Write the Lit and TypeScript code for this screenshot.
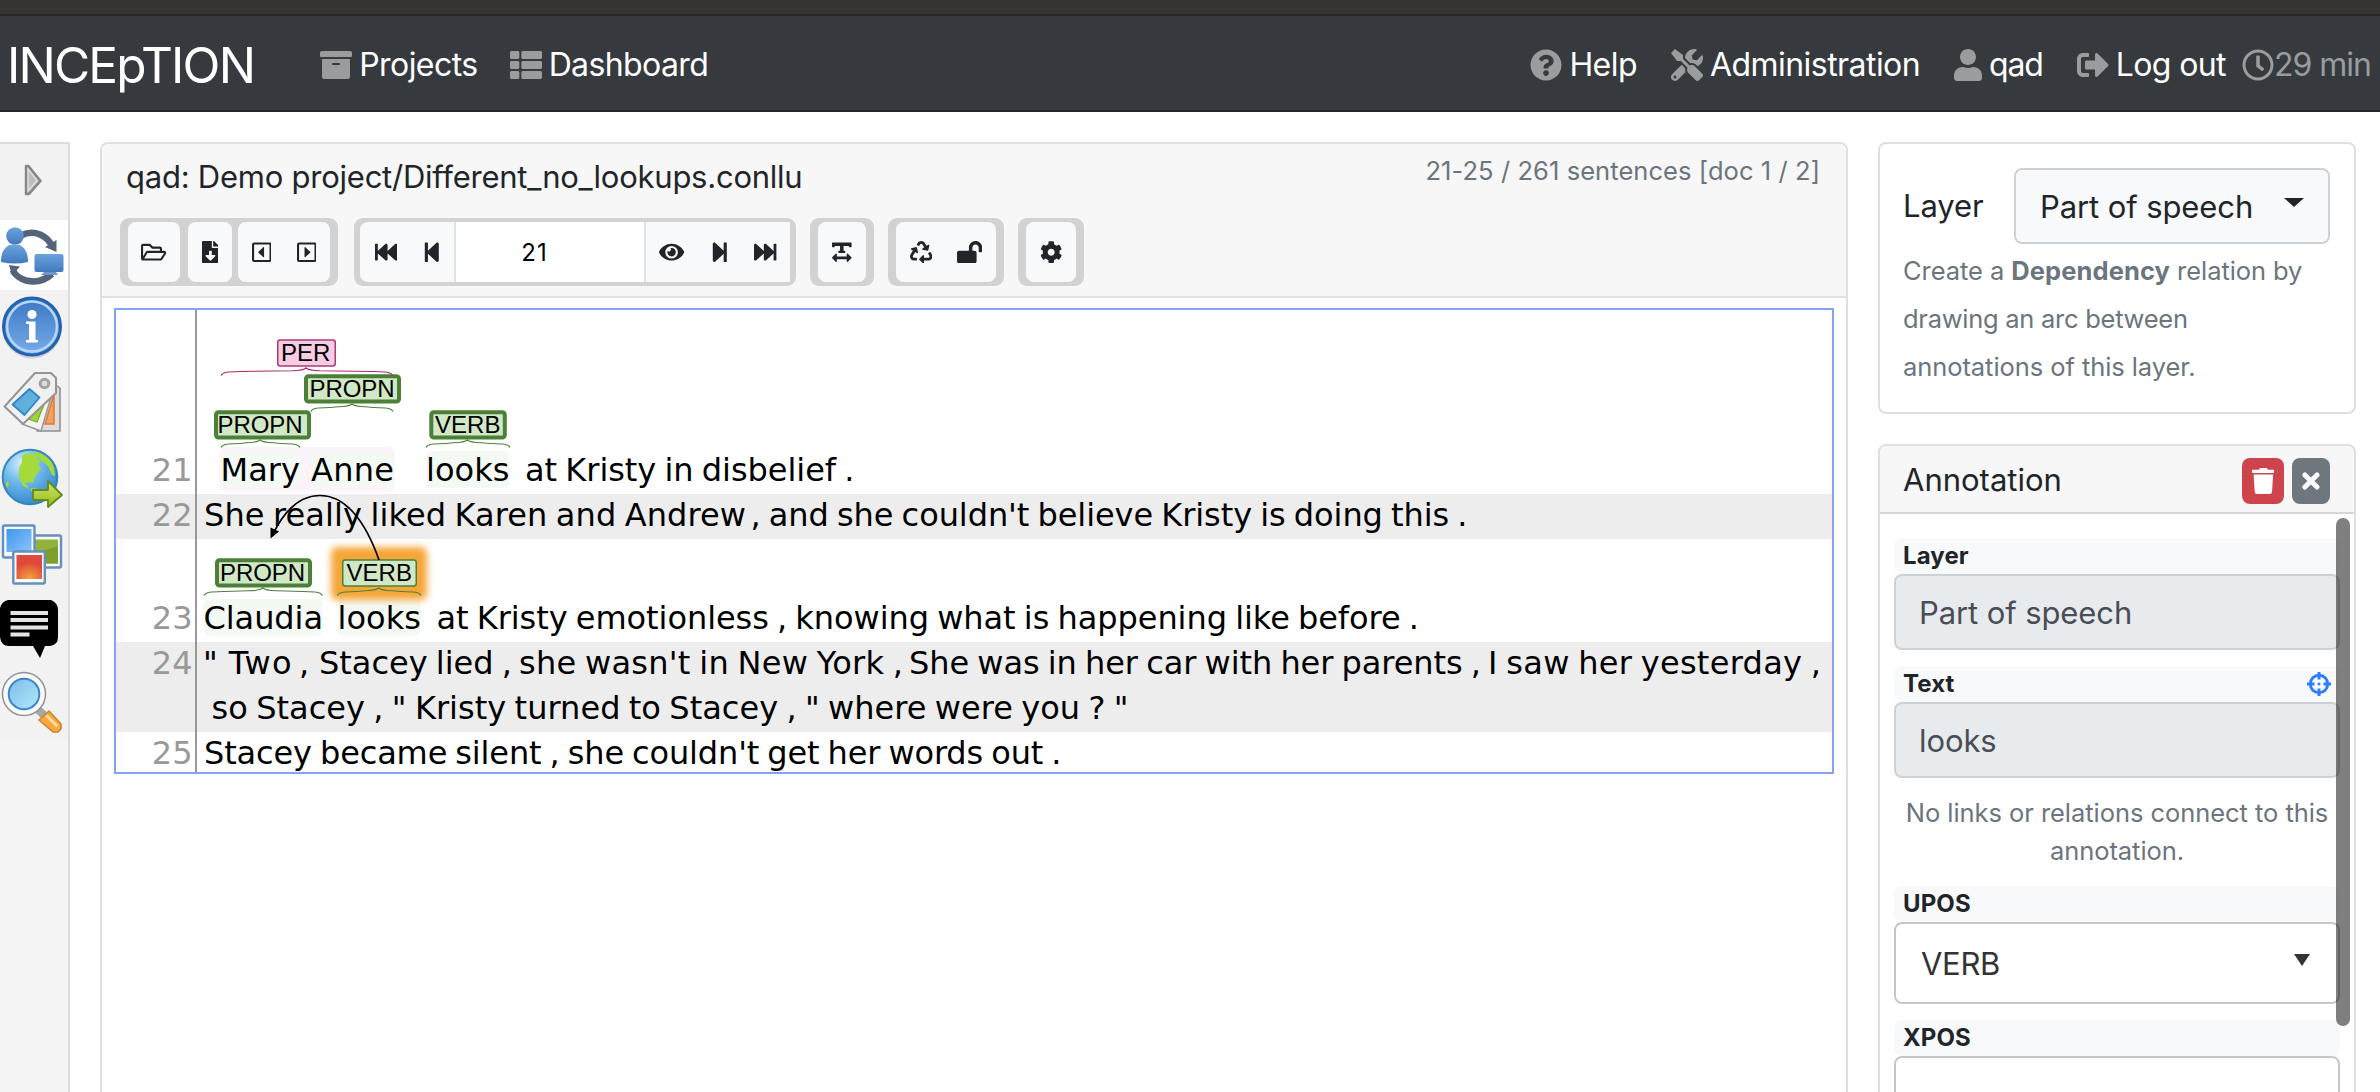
import { LitElement, html, css, svg } from "lit";
import { customElement } from "lit/decorators.js";

/* Glyph outlines: [viewBox width, viewBox height, markup] */
const ICONS: Record<string, [number, number, unknown]> = {
  archive: [512, 512, svg`<path d="M32 448c0 17.7 14.3 32 32 32h384c17.7 0 32-14.3 32-32V160H32v288zm160-212c0-6.6 5.4-12 12-12h104c6.6 0 12 5.4 12 12v8c0 6.6-5.4 12-12 12H204c-6.6 0-12-5.4-12-12v-8zM480 32H32C14.3 32 0 46.3 0 64v48c0 8.8 7.2 16 16 16h480c8.8 0 16-7.2 16-16V64c0-17.7-14.3-32-32-32z"/>`],
  list: [512, 512, svg`<path d="M149.333 216v80c0 13.255-10.745 24-24 24H24c-13.255 0-24-10.745-24-24v-80c0-13.255 10.745-24 24-24h101.333c13.255 0 24 10.745 24 24zM0 376v80c0 13.255 10.745 24 24 24h101.333c13.255 0 24-10.745 24-24v-80c0-13.255-10.745-24-24-24H24c-13.255 0-24 10.745-24 24zM125.333 32H24C10.745 32 0 42.745 0 56v80c0 13.255 10.745 24 24 24h101.333c13.255 0 24-10.745 24-24V56c0-13.255-10.745-24-24-24zm80 448H488c13.255 0 24-10.745 24-24v-80c0-13.255-10.745-24-24-24H205.333c-13.255 0-24 10.745-24 24v80c0 13.255 10.745 24 24 24zm-24-424v80c0 13.255 10.745 24 24 24H488c13.255 0 24-10.745 24-24V56c0-13.255-10.745-24-24-24H205.333c-13.255 0-24 10.745-24 24zm24 264H488c13.255 0 24-10.745 24-24v-80c0-13.255-10.745-24-24-24H205.333c-13.255 0-24 10.745-24 24v80c0 13.255 10.745 24 24 24z"/>`],
  help: [512, 512, svg`<path d="M504 256c0 136.997-111.043 248-248 248S8 392.997 8 256C8 119.083 119.043 8 256 8s248 111.083 248 248zM262.655 90c-54.497 0-89.255 22.957-116.549 63.758-3.536 5.286-2.353 12.415 2.715 16.258l34.699 26.31c5.205 3.947 12.621 3.008 16.665-2.122 17.864-22.658 30.113-35.797 57.303-35.797 20.429 0 45.698 13.148 45.698 32.958 0 14.976-12.363 22.667-32.534 33.976C247.128 238.528 216 254.941 216 296v4c0 6.627 5.373 12 12 12h56c6.627 0 12-5.373 12-12v-1.333c0-28.462 83.186-29.647 83.186-106.667 0-58.002-60.165-102-116.531-102zM256 338c-25.365 0-46 20.635-46 46 0 25.364 20.635 46 46 46s46-20.636 46-46c0-25.365-20.635-46-46-46z"/>`],
  tools: [512, 512, svg`<path d="M501.1 395.7L384 278.6c-23.1-23.1-57.6-27.6-85.4-13.9L192 158.1V96L64 0 0 64l96 128h62.1l106.6 106.6c-13.6 27.8-9.2 62.3 13.9 85.4l117.1 117.1c14.6 14.6 38.2 14.6 52.7 0l52.7-52.7c14.5-14.6 14.5-38.2 0-52.7zM331.7 225c28.3 0 54.9 11 74.9 31l19.4 19.4c15.8-6.9 30.8-16.5 43.8-29.5 37.1-37.1 49.7-89.3 37.9-136.7-2.2-9-13.5-12.1-20.1-5.5l-74.4 74.4-67.9-11.3L334 98.9l74.4-74.4c6.6-6.6 3.4-17.9-5.7-20.2-47.4-11.7-99.6.9-136.6 37.9-28.5 28.5-41.9 66.1-41.2 103.6l82.1 82.1c8.1-1.9 16.5-2.9 24.7-2.9zm-103.9 82l-56.7-56.7L18.7 402.8c-25 25-25 65.5 0 90.5s65.5 25 90.5 0l123.6-123.6c-7.6-19.9-9.9-41.6-5-62.7zM64 472c-13.2 0-24-10.8-24-24 0-13.3 10.7-24 24-24s24 10.7 24 24c0 13.2-10.7 24-24 24z"/>`],
  user: [448, 512, svg`<path d="M224 256c70.7 0 128-57.3 128-128S294.7 0 224 0 96 57.3 96 128s57.3 128 128 128zm89.6 32h-16.7c-22.2 10.2-46.9 16-72.9 16s-50.6-5.8-72.9-16h-16.7C60.2 288 0 348.2 0 422.4V464c0 26.5 21.5 48 48 48h352c26.5 0 48-21.5 48-48v-41.6c0-74.2-60.2-134.4-134.4-134.4z"/>`],
  logout: [512, 512, svg`<path d="M497 273L329 441c-15 15-41 4.5-41-17v-96H152c-13.3 0-24-10.7-24-24v-96c0-13.3 10.7-24 24-24h136V88c0-21.4 25.9-32 41-17l168 168c9.3 9.4 9.3 24.6 0 34zM192 436v-40c0-6.6-5.4-12-12-12H96c-17.7 0-32-14.3-32-32V160c0-17.7 14.3-32 32-32h84c6.6 0 12-5.4 12-12V76c0-6.6-5.4-12-12-12H96c-53 0-96 43-96 96v192c0 53 43 96 96 96h84c6.6 0 12-5.4 12-12z"/>`],
  clock: [512, 512, svg`<path d="M256 8C119 8 8 119 8 256s111 248 248 248 248-111 248-248S393 8 256 8zm0 448c-110.500 0-200-89.500-200-200S145.500 56 256 56s200 89.500 200 200-89.500 200-200 200zm61.800-104.400l-84.900-61.700c-3.100-2.300-4.900-5.900-4.900-9.700V116c0-6.600 5.400-12 12-12h32c6.600 0 12 5.400 12 12v141.700l66.800 48.600c5.400 3.900 6.500 11.400 2.600 16.800L334.600 349c-3.900 5.300-11.400 6.500-16.800 2.600z"/>`],
  folder: [576, 512, svg`<path d="M527.9 224H480v-48c0-26.500-21.500-48-48-48H272l-64-64H48C21.500 64 0 85.500 0 112v288c0 26.500 21.500 48 48 48h400c16.500 0 31.900-8.500 40.700-22.600l79.900-128c20-31.900-3-73.400-40.700-73.400zM48 118c0-3.300 2.700-6 6-6h134.100l64 64H426c3.300 0 6 2.700 6 6v42H152c-16.800 0-32.400 8.800-41.100 23.200L48 351.400zm400 282H72l77.200-128H528z"/>`],
  download: [384, 512, svg`<path d="M224 136V0H24C10.700 0 0 10.700 0 24v464c0 13.300 10.700 24 24 24h336c13.300 0 24-10.700 24-24V160H248c-13.200 0-24-10.800-24-24zm76.450 211.360l-96.420 95.700c-6.650 6.610-17.390 6.610-24.040 0l-96.420-95.700C73.420 337.290 80.540 320 94.820 320H160v-80c0-8.840 7.160-16 16-16h32c8.840 0 16 7.160 16 16v80h65.180c14.280 0 21.400 17.290 11.270 27.360zM377 105L279.100 7c-4.500-4.500-10.600-7-17-7H256v128h128v-6.100c0-6.300-2.500-12.400-7-16.900z"/>`],
  caretLeft: [448, 512, svg`<rect x="24" y="56" width="400" height="400" rx="24" fill="none" stroke="currentColor" stroke-width="48"/><path d="M276 152v208c0 12-12 16-20 8L148 268c-7-7-7-17 0-24l108-100c8-8 20-4 20 8z"/>`],
  caretRight: [448, 512, svg`<rect x="24" y="56" width="400" height="400" rx="24" fill="none" stroke="currentColor" stroke-width="48"/><path d="M172 152v208c0 12 12 16 20 8l108-100c7-7 7-17 0-24L192 144c-8-8-20-4-20 8z"/>`],
  fastBack: [512, 512, svg`<path d="M0 436V76c0-6.600 5.400-12 12-12h40c6.600 0 12 5.400 12 12v151.900L235.500 71.400C256.100 54.300 288 68.600 288 96v131.900L459.500 71.400C480.100 54.300 512 68.600 512 96v320c0 27.400-31.900 41.700-52.500 24.600L288 285.300V416c0 27.400-31.900 41.700-52.500 24.600L64 285.300V436c0 6.600-5.400 12-12 12H12c-6.600 0-12-5.400-12-12z"/>`],
  fastForward: [512, 512, svg`<path transform="matrix(-1 0 0 1 512 0)" d="M0 436V76c0-6.600 5.400-12 12-12h40c6.600 0 12 5.400 12 12v151.900L235.500 71.400C256.100 54.300 288 68.600 288 96v131.900L459.500 71.400C480.100 54.300 512 68.600 512 96v320c0 27.400-31.900 41.700-52.500 24.600L288 285.300V416c0 27.400-31.900 41.700-52.500 24.600L64 285.300V436c0 6.600-5.400 12-12 12H12c-6.600 0-12-5.400-12-12z"/>`],
  stepBack: [448, 512, svg`<path d="M64 468V44c0-6.600 5.400-12 12-12h48c6.600 0 12 5.400 12 12v176.400l195.500-181C352.100 22.300 384 36.600 384 64v384c0 27.400-31.900 41.700-52.500 24.600L136 292.700V468c0 6.600-5.400 12-12 12H76c-6.600 0-12-5.400-12-12z"/>`],
  stepForward: [448, 512, svg`<path transform="matrix(-1 0 0 1 448 0)" d="M64 468V44c0-6.600 5.400-12 12-12h48c6.600 0 12 5.400 12 12v176.400l195.500-181C352.100 22.300 384 36.600 384 64v384c0 27.400-31.900 41.700-52.500 24.600L136 292.700V468c0 6.600-5.400 12-12 12H76c-6.600 0-12-5.400-12-12z"/>`],
  eye: [576, 512, svg`<path d="M572.520 241.400C518.290 135.590 410.930 64 288 64S57.680 135.640 3.480 241.410a32.350 32.350 0 0 0 0 29.190C57.710 376.410 165.070 448 288 448s230.320-71.640 284.520-177.410a32.350 32.350 0 0 0 0-29.190zM288 400a144 144 0 1 1 144-144 143.930 143.930 0 0 1-144 144zm0-240a95.310 95.310 0 0 0-25.310 3.790 47.850 47.850 0 0 1-66.900 66.900A95.780 95.780 0 1 0 288 160z"/>`],
  textWidth: [448, 512, svg`<path d="M432 32H16A16 16 0 0 0 0 48v80a16 16 0 0 0 16 16h32a16 16 0 0 0 16-16v-16h120v112h-24a16 16 0 0 0-16 16v16a16 16 0 0 0 16 16h128a16 16 0 0 0 16-16v-16a16 16 0 0 0-16-16h-24V112h120v16a16 16 0 0 0 16 16h32a16 16 0 0 0 16-16V48a16 16 0 0 0-16-16zm-68.690 260.690C354 283.360 336 288.360 336 304v48H112v-48c0-14.310-17.310-21.320-27.310-11.310l-80 80a16 16 0 0 0 0 22.620l80 80C94 484.640 112 479.640 112 464v-48h224v48c0 14.310 17.310 21.320 27.310 11.310l80-80a16 16 0 0 0 0-22.620z"/>`],
  recycle: [512, 512, svg`<path d="M184.561 261.903c3.232 13.997-12.123 24.635-24.068 17.168l-40.736-25.455-50.867 81.402C55.606 356.273 70.960 384 96.012 384H148c6.627 0 12 5.373 12 12v40c0 6.627-5.373 12-12 12H96.115c-75.334 0-121.302-83.048-81.408-146.880l50.822-81.388-40.725-25.448c-12.081-7.547-8.966-25.961 4.879-29.158l110.237-25.450c8.611-1.988 17.201 3.381 19.189 11.990l25.452 110.237zm98.561-182.915l41.289 66.076-40.740 25.457c-12.051 7.528-9 25.953 4.879 29.158l110.237 25.450c8.672 1.999 17.215-3.438 19.189-11.990l25.450-110.237c3.197-13.844-11.990-24.719-24.068-17.168l-40.687 25.424-41.263-66.082c-37.521-60.033-125.209-60.171-162.816 0l-17.963 28.766c-3.510 5.620-1.800 13.021 3.820 16.533l33.919 21.195c5.620 3.512 13.024 1.803 16.536-3.817l17.961-28.743c12.712-20.341 41.973-19.676 54.257-.022zM497.288 301.120l-27.515-44.065c-3.511-5.623-10.916-7.334-16.538-3.821l-33.861 21.159c-5.620 3.512-7.330 10.915-3.818 16.536l27.564 44.112c13.257 21.211-2.057 48.960-27.136 48.960H320V336.020c0-14.213-17.242-21.383-27.313-11.313l-80 79.981c-6.249 6.248-6.249 16.379 0 22.627l80 79.989C302.689 517.308 320 510.300 320 495.989V448h95.880c75.274 0 121.335-82.997 81.408-146.880z"/>`],
  unlock: [576, 512, svg`<path d="M423.500 0C339.500.3 272 69.500 272 153.500V224H48c-26.500 0-48 21.500-48 48v192c0 26.500 21.500 48 48 48h352c26.500 0 48-21.500 48-48V272c0-26.500-21.500-48-48-48h-48v-71.100c0-39.600 31.700-72.500 71.300-72.900 40-.4 72.700 32.100 72.700 72v80c0 13.300 10.700 24 24 24h32c13.300 0 24-10.700 24-24v-80C576 68 507.500-.3 423.500 0z"/>`],
  cog: [512, 512, svg`<path d="M487.400 315.700l-42.600-24.600c4.300-23.200 4.300-47 0-70.200l42.600-24.600c4.900-2.800 7.100-8.600 5.500-14-11.100-35.600-30-67.800-54.700-94.600-3.800-4.100-10-5.100-14.800-2.300L380.800 110c-17.900-15.400-38.500-27.300-60.800-35.100V25.800c0-5.600-3.900-10.500-9.400-11.700-36.700-8.200-74.300-7.800-109.200 0-5.500 1.200-9.400 6.100-9.400 11.700V75c-22.200 7.900-42.800 19.800-60.800 35.100L88.700 85.500c-4.900-2.800-11-1.900-14.800 2.300-24.700 26.700-43.600 58.900-54.700 94.600-1.700 5.400.6 11.200 5.500 14L67.300 221c-4.300 23.200-4.300 47 0 70.200l-42.600 24.600c-4.900 2.800-7.100 8.600-5.500 14 11.100 35.600 30 67.800 54.700 94.600 3.800 4.100 10 5.100 14.800 2.300l42.600-24.600c17.900 15.400 38.500 27.300 60.800 35.100v49.200c0 5.600 3.900 10.500 9.400 11.700 36.700 8.200 74.300 7.800 109.200 0 5.500-1.200 9.400-6.100 9.400-11.700v-49.200c22.200-7.900 42.800-19.800 60.800-35.100l42.600 24.600c4.900 2.800 11 1.900 14.800-2.300 24.700-26.700 43.600-58.900 54.700-94.600 1.500-5.500-.7-11.300-5.600-14.100zM256 336c-44.100 0-80-35.900-80-80s35.900-80 80-80 80 35.900 80 80-35.900 80-80 80z"/>`],
  trash: [448, 512, svg`<path d="M432 32H312l-9.400-18.700A24 24 0 0 0 281.100 0H166.800a23.720 23.720 0 0 0-21.400 13.300L136 32H16A16 16 0 0 0 0 48v32a16 16 0 0 0 16 16h416a16 16 0 0 0 16-16V48a16 16 0 0 0-16-16zM53.200 467a48 48 0 0 0 47.900 45h245.800a48 48 0 0 0 47.900-45L416 128H32z"/>`],
  times: [352, 512, svg`<path d="M56 136l240 240M296 136L56 376" fill="none" stroke="currentColor" stroke-width="96" stroke-linecap="round"/>`],
  crosshairs: [512, 512, svg`<g fill="none" stroke="currentColor" stroke-width="62"><circle cx="256" cy="256" r="186"/><path d="M256 0v160M256 352v160M0 256h160M352 256h160"/></g><circle cx="256" cy="256" r="32"/>`],
};

/* em is the font size the glyph is drawn at; its box is 512 units tall */
const icon = (name: string, em: number) => {
  const [w, h, body] = ICONS[name];
  return html`<svg class="icon" width=${(w * em) / 512} height=${em} viewBox="0 0 ${w} ${h}" fill="currentColor" aria-hidden="true">${body}</svg>`;
};

@customElement("app-navbar")
export class AppNavbar extends LitElement {
  static styles = css`
    :host { display: flex; align-items: center; box-sizing: border-box; height: 96px; padding: 3px 9px 0 7px;
      background: #363a3e; border-bottom: 2px solid #24282c; color: #fff; font: 32px/40px Inter, "Liberation Sans", sans-serif; white-space: nowrap; }
    .brand { font-size: 49.500px; letter-spacing: -1.800px; margin-right: 66px; }
    .left, .right, .item { display: flex; align-items: center; }
    .left { gap: 32px; }
    .right { gap: 34px; margin-left: auto; }
    .item { gap: 7px; letter-spacing: -0.550px; }
    .dash { letter-spacing: -0.600px; }
    .user { letter-spacing: -1.200px; }
    .out { letter-spacing: -0.600px; }
    .timer { gap: 0; margin-left: -18px; color: #999c9f; letter-spacing: -1px; }
    .icon { display: block; color: #9a9d9f; }
  `;
  render() {
    return html`
      <span class="brand">INCEpTION</span>
      <nav class="left">
        <span class="item">${icon("archive", 32)}<span>Projects</span></span>
        <span class="item dash">${icon("list", 32)}<span>Dashboard</span></span>
      </nav>
      <nav class="right">
        <span class="item">${icon("help", 32)}<span>Help</span></span>
        <span class="item">${icon("tools", 32)}<span>Administration</span></span>
        <span class="item user">${icon("user", 32)}<span>qad</span></span>
        <span class="item out">${icon("logout", 32)}<span>Log out</span></span>
        <span class="item timer">${icon("clock", 32)}<span>29 min</span></span>
      </nav>`;
  }
}

@customElement("app-sidebar")
export class AppSidebar extends LitElement {
  static styles = css`
    :host { display: flex; flex-direction: column; box-sizing: border-box; width: 70px; height: 950px; flex: none;
      background: #f4f4f4; border-top: 2px solid #dcdcdc; border-right: 2px solid #dcdcdc; }
    .slot { height: 76px; background: #f2f2f2; flex: none; }
    .active { height: 70px; background: #fff; }
    svg { display: block; overflow: visible; }
    .pad { padding-top: 6px; box-sizing: border-box; }
    .last.pad { padding-top: 2px; height: 70px; }
  `;
  render() {
    return html`
      <div class="slot"><svg width="68" height="76" viewBox="0 0 68 76">
        <path d="M27 22v29l15-14.500z" fill="#bbb" opacity=".5"/>
        <path d="M26 22v28h3l11.500-13L28.500 22z" fill="#bdbdbd" stroke="#858585" stroke-width="2.400" stroke-linejoin="round"/>
        <path d="M28 25v22l9-10.500z" fill="none" stroke="#e4e4e4" stroke-width="1.200"/></svg></div>
      <div class="slot active"><svg width="68" height="70" viewBox="0 0 68 70">
        <defs><linearGradient id="b" x1="0" y1="0" x2="0" y2="1"><stop offset="0" stop-color="#6ba3df"/><stop offset="1" stop-color="#4179bd"/></linearGradient></defs>
        <g fill="none" stroke="#56647a" stroke-width="6.500"><path d="M21 15.500Q31 10.500 40 14.500Q48 18 52 26"/><path d="M12.500 50Q17 58 26 60.500Q41 64 52 54"/></g>
        <path d="M45 27l11.500-7v12z" fill="#56647a"/><path d="M9 45l11 1.500-8 9z" fill="#56647a"/>
        <path d="M1 42c0-11 4-14 8-17h11c4 3 8 6 8 17q-13 3-27 0z" fill="url(#b)"/><circle cx="15" cy="16" r="8.800" fill="url(#b)"/>
        <rect x="34.500" y="34" width="29" height="18" rx="2" fill="url(#b)"/><path d="M44 52h12l2 3H41z" fill="#6f96c8"/></svg></div>
      <div class="slot pad"><svg width="68" height="64" viewBox="0 0 68 64">
        <defs><linearGradient id="i" x1="0" y1="0" x2="0" y2="1"><stop offset="0" stop-color="#3a77c2"/><stop offset="1" stop-color="#79acea"/></linearGradient></defs>
        <circle cx="32" cy="33" r="29.500" fill="#bbb" opacity=".6"/>
        <circle cx="32" cy="30.500" r="28.500" fill="url(#i)" stroke="#2660b0" stroke-width="3"/><circle cx="32" cy="30.500" r="25" fill="none" stroke="#b5d7fa" stroke-width="2.600"/>
        <circle cx="32" cy="18.500" r="4.600" fill="#fff"/><path d="M26 25.500h9.500v18.500H38v2.500H26V44h3V28h-3z" fill="#fff"/></svg></div>
      <div class="slot pad"><svg width="68" height="64" viewBox="0 0 68 64">
        <path d="M47 7l13 9v43H37z" fill="#ddd" stroke="#8d8d8d" stroke-width="1.500" stroke-linejoin="round"/><path d="M45 52l9-30v30z" fill="#f0a065" stroke="#e07a35" stroke-width="1.500"/>
        <path d="M54 15L41 59 22 52z" fill="#f3f3f3" stroke="#999" stroke-width="1.500" stroke-linejoin="round"/><path d="M45 30l-8 20-9-3 8-12z" fill="#9bd43c" stroke="#74b020" stroke-width="1.200"/>
        <path d="M35 1h16l5 5v15L23 52 4.500 34.500z" fill="#f0f0f0" stroke="#949494" stroke-width="2" stroke-linejoin="round"/>
        <path d="M29.500 17l10 8.500-15 17.500-12-10.500z" fill="#62aedd" stroke="#2f86c6" stroke-width="1.800" stroke-linejoin="round"/>
        <circle cx="44.500" cy="11.500" r="4.300" fill="#ddd" stroke="#a2a2a2" stroke-width="3"/></svg></div>
      <div class="slot pad"><svg width="68" height="64" viewBox="0 0 68 64">
        <defs><radialGradient id="g" cx=".35" cy=".25" r=".8"><stop offset="0" stop-color="#d3efff"/><stop offset=".45" stop-color="#6db8ea"/><stop offset="1" stop-color="#3284ce"/></radialGradient>
        <linearGradient id="ga" x1="0" y1="0" x2="0" y2="1"><stop offset="0" stop-color="#d5e86a"/><stop offset="1" stop-color="#8fb91c"/></linearGradient></defs>
        <circle cx="30" cy="29" r="27.300" fill="url(#g)" stroke="#3387bd" stroke-width="2"/>
        <path d="M22 8l4-3 12 2-2 4 5 1-3 5 3 4-6 7-2 7-4-1-4 1 4 6-6-3-4-9v-9l3-6z" fill="#a4db3a"/><path d="M34 3c9 2 18 8 20 17l1 8-3-1-4-9-6-5-5-5zM31 40l8 1v4l-8-2zM6 33l3 2-1 5-2-3z" fill="#a4db3a"/>
        <path d="M33 42h15v-9l14 14-14 12v-7H33z" fill="url(#ga)" stroke="#66881b" stroke-width="1.800" stroke-linejoin="round"/></svg></div>
      <div class="slot pad"><svg width="68" height="64" viewBox="0 0 68 64">
        <defs><linearGradient id="p" x1="0" y1="0" x2="1" y2="1"><stop offset="0" stop-color="#3f97f0"/><stop offset="1" stop-color="#8cc4f7"/></linearGradient>
        <radialGradient id="r" cx=".5" cy="1" r="1"><stop offset="0" stop-color="#f3a63c"/><stop offset=".7" stop-color="#e0473a"/><stop offset="1" stop-color="#df4b40"/></radialGradient></defs>
        <rect x="29.500" y="11.500" width="31.500" height="32" rx="1.500" fill="#fbfbfb" stroke="#6590bd" stroke-width="2.400"/><rect x="33" y="15.500" width="25" height="24" fill="#8fb33c"/><path d="M33 28q12-1 25-6v17.500H33z" fill="#7c9f2d"/>
        <rect x="3" y="1.500" width="31.500" height="32" rx="1.500" fill="#f4f9ff" stroke="#6590bd" stroke-width="2.400"/><rect x="6.500" y="5" width="25" height="23" fill="url(#p)"/>
        <rect x="13.300" y="27.500" width="31.500" height="32" rx="1.500" fill="#fbfbfb" stroke="#6590bd" stroke-width="2.400"/><rect x="16.500" y="31" width="25.500" height="24" fill="url(#r)"/></svg></div>
      <div class="slot pad"><svg width="68" height="64" viewBox="0 0 68 64">
        <path d="M8 0h43q7 3 7 10v27q0 8-8 9h-5l-5 12-7-12H9q-8 0-9-9V8q2-7 8-8z" fill="#000"/>
        <g fill="#e4e4e4"><rect x="10.500" y="11" width="37.500" height="4"/><rect x="10.500" y="18" width="37.500" height="4"/><rect x="10.500" y="25.500" width="37.500" height="4"/><rect x="10.500" y="32.500" width="19" height="4"/></g></svg></div>
      <div class="slot last pad"><svg width="68" height="64" viewBox="0 0 68 64">
        <defs><linearGradient id="m" x1="0" y1="0" x2="1" y2="1"><stop offset="0" stop-color="#7bb8e8"/><stop offset="1" stop-color="#b5ecfc"/></linearGradient></defs>
        <path d="M36 36l9 8" stroke="#a8a8a8" stroke-width="8"/><path d="M39 48l10-9 12 13v5l-3 3h-5z" fill="#f7a840" stroke="#c9852d" stroke-width="1.600" stroke-linejoin="round"/><path d="M46.500 43.500l11 11" stroke="#fcdc9c" stroke-width="3"/>
        <circle cx="24" cy="22" r="19" fill="none" stroke="#929292" stroke-width="6.500"/><circle cx="24" cy="22" r="18" fill="url(#m)" stroke="#fafafa" stroke-width="5.500"/><circle cx="24" cy="22" r="15.300" fill="none" stroke="#3b86c8" stroke-width="2"/></svg></div>`;
  }
}

type Tag = { label: string; x: number; y: number; w: number; tx: number; tw: number; from: number; to: number; peak: number; kind?: "per" | "sel" };
const TAGS: Tag[] = [
  { label: "PROPN", x: 304, y: 374.300, w: 97, tx: 309.500, tw: 85, from: 310.700, to: 393, peak: 352 },
  { label: "PROPN", x: 214, y: 410.300, w: 97, tx: 217.500, tw: 85, from: 221, to: 300, peak: 260 },
  { label: "VERB", x: 429.300, y: 410.300, w: 77.500, tx: 435, tw: 65.500, from: 426, to: 510, peak: 467.300 },
  { label: "PROPN", x: 215, y: 558.300, w: 97, tx: 220, tw: 85, from: 204, to: 322.500, peak: 262.700 },
  { label: "VERB", x: 342, y: 559.300, w: 75, tx: 346.500, tw: 65.500, from: 337.300, to: 421, peak: 378.700, kind: "sel" },
  { label: "PER", x: 277, y: 339.300, w: 59, tx: 281, tw: 49.300, from: 221, to: 392.700, peak: 306, kind: "per" },
];
/* [text, x, baseline, advance] */
const TEXT: [string, number, number, number][] = [
  ["Mary", 220.500, 481, 79.500], ["Anne", 311, 481, 83], ["looks", 426, 481, 83.500], ["at Kristy in disbelief .", 525, 481, 329.500],
  ["She really liked Karen and Andrew", 204, 526, 542], [", and she couldn't believe Kristy is doing this .", 750.500, 526, 717],
  ["Claudia", 203.500, 628.500, 119.500], ["looks", 337.500, 628.500, 83.500],
  ["at Kristy emotionless , knowing what is happening like before .", 436.500, 628.500, 982.500],
  ["\" Two", 203, 674, 88.500], [",", 299, 674, 10.200], ["Stacey lied ,", 319, 674, 193], ["she wasn't in New York ,", 519, 674, 384],
  ["She was in her car with her parents ,", 909, 674, 572], ["I saw her yesterday ,", 1488, 674, 333],
  ["so Stacey , \" Kristy turned to Stacey , \" where were you ? \"", 211.500, 719, 917],
  ["Stacey became silent , she couldn't get her words out .", 204, 764, 857.500],
];

@customElement("annotation-canvas")
export class AnnotationCanvas extends LitElement {
  static styles = css`
    :host { display: block; box-sizing: border-box; height: 466px; border: 2px solid #84a2f8; }
    svg { display: block; }
    .text { font: 32px "DejaVu Sans", Verdana, sans-serif; fill: #000; word-spacing: -1.900px; white-space: pre; }
    .num { font: 32px "DejaVu Sans", Verdana, sans-serif; fill: #999; text-anchor: end; }
    .tag { font: 24px "Liberation Sans", Arial, sans-serif; fill: #000; }
  `;
  private brace({ from, to, peak, kind, y }: Tag) {
    const top = y + (kind ? 28.500 : 29.500);
    const mid = top + 4, end = top + 7.700;
    const color = kind === "per" ? "#a8296d" : "#4c8338";
    return svg`<path fill="none" stroke=${color} stroke-width="1.100" d="M${from} ${end}C${from + 2} ${mid} ${from + 7} ${mid} ${from + 20} ${mid - 0.3}L${peak - 14} ${mid - 1}Q${peak - 2} ${mid - 1.500} ${peak} ${top}Q${peak + 2} ${mid - 1.500} ${peak + 14} ${mid - 1}L${to - 20} ${mid - 0.3}C${to - 7} ${mid} ${to - 2} ${mid} ${to} ${end}"/>`;
  }
  private box(t: Tag) {
    const thin = !!t.kind;
    const s = thin ? 1.500 : 4, h = thin ? 27.500 : 29.300;
    const fill = t.kind === "per" ? "#f5cde3" : "#d0e8c6";
    const stroke = t.kind === "per" ? "#a93b78" : "#4c8038";
    return svg`
      ${t.kind === "sel" ? svg`<rect x="331" y="547" width="96" height="53" rx="6" fill="#f5a638" filter="url(#glow)"/>` : ""}
      <rect x=${t.x + s / 2} y=${t.y + s / 2} width=${t.w - s} height=${h - s} rx="2.500" fill=${fill} stroke=${stroke} stroke-width=${s}/>
      <text class="tag" x=${t.tx} y=${t.y + (thin ? 21.400 : 22.500)} textLength=${t.tw}>${t.label}</text>`;
  }
  render() {
    const nums: [number, number][] = [[21, 481], [22, 526], [23, 628.500], [24, 674], [25, 764]];
    return html`<svg width="1716" height="462" viewBox="116 310 1716 462">
      <defs><filter id="glow" x="-20%" y="-40%" width="140%" height="180%"><feGaussianBlur stdDeviation="3.500"/></filter></defs>
      <rect x="116" y="494" width="1716" height="45" fill="#ededed"/>
      <rect x="116" y="642" width="1716" height="90" fill="#ededed"/>
      <rect x="195" y="310" width="2" height="462" fill="#999"/>
      <rect x="219.500" y="447" width="175" height="44.500" rx="5" fill="#fcf4fa"/>
      ${[[221, 451, 79], [310.700, 451, 82.300], [426.500, 451, 83], [204, 599, 118], [337.500, 599, 83]].map(([x, y, w]) =>
        svg`<rect x=${x} y=${y} width=${w} height="36.700" rx="5" fill="#f4f9f3"/>`)}
      ${nums.map(([n, y]) => svg`<text class="num" x="192.500" y=${y}>${n}</text>`)}
      ${TAGS.map((t) => svg`${this.box(t)}${this.brace(t)}`)}
      ${TEXT.map(([s, x, y, w]) => svg`<text class="text" x=${x} y=${y} textLength=${w}>${s}</text>`)}
      <path d="M379 560C365 520 345 495.500 320 495.500C302 495.500 286 508 273.500 533" fill="none" stroke="#000" stroke-width="1.700"/>
      <path d="M270.500 527.500l8.500 4-8.500 7z"/>
    </svg>`;
  }
}

@customElement("editor-card")
export class EditorCard extends LitElement {
  static styles = css`
    :host { display: flex; flex-direction: column; box-sizing: border-box; width: 1748px; height: 970px; flex: none;
      border: 2px solid #dfdfdf; border-radius: 8px; background: #fff; overflow: hidden; color: #212529; font-family: Inter, "Liberation Sans", sans-serif; }
    .head { box-sizing: border-box; height: 154px; background: #f7f7f7; border-bottom: 2px solid #dee2e6; padding: 14px 26px 0 24px; }
    .row { display: flex; justify-content: space-between; height: 60px; white-space: nowrap; }
    .title { font-size: 31px; line-height: 38px; letter-spacing: -0.240px; }
    .pos { font-size: 25.500px; line-height: 26px; letter-spacing: 0.070px; color: #6c757d; }
    .bar { display: flex; gap: 14px; margin-left: -6px; }
    .group { display: flex; box-sizing: border-box; height: 68px; padding: 4px 8px; background: #d2d2d2; border-radius: 9px; }
    .btn { display: flex; align-items: center; justify-content: center; height: 60px; background: #f8f9fb; border-radius: 8px; }
    .w52 { width: 52px; } .w44 { width: 44px; } .w48 { width: 48px; } .w50 { width: 50px; }
    .files { gap: 8px; margin-right: 2px; }
    .files .pair { width: 92px; gap: 25.500px; margin-left: -2px; }
    .paging { padding: 4px 6px; }
    .prev { width: 94px; gap: 25px; border-radius: 8px 0 0 8px; padding-left: 3px; box-sizing: border-box; }
    .next { width: 144px; gap: 25px; border-radius: 0; }
    .page { width: 188px; border: solid #dee2e6; border-width: 0 2px; background: #fff; color: #000; display: flex; align-items: center; justify-content: center; font-size: 24px; letter-spacing: 1px; }
    .page span { margin-right: 31px; }
    .state { width: 100px; gap: 25px; }
    .icon { display: block; flex: none; }
    .body { padding: 10px 12px; }
  `;
  render() {
    return html`
      <div class="head">
        <div class="row"><span class="title">qad: Demo project/Different_no_lookups.conllu</span><span class="pos">21-25 / 261 sentences [doc 1 / 2]</span></div>
        <div class="bar">
          <div class="group files">
            <span class="btn w52">${icon("folder", 22.400)}</span><span class="btn w44">${icon("download", 22.400)}</span>
            <span class="btn pair">${icon("caretLeft", 22.400)}${icon("caretRight", 22.400)}</span>
          </div>
          <div class="group paging">
            <span class="btn prev">${icon("fastBack", 22.400)}${icon("stepBack", 22.400)}</span>
            <span class="page"><span>21</span></span>
            <span class="btn next">${icon("eye", 22.400)}${icon("stepForward", 22.400)}${icon("fastForward", 22.400)}</span>
          </div>
          <div class="group"><span class="btn w48">${icon("textWidth", 22.400)}</span></div>
          <div class="group"><span class="btn state">${icon("recycle", 22.400)}${icon("unlock", 22.400)}</span></div>
          <div class="group"><span class="btn w50">${icon("cog", 22.400)}</span></div>
        </div>
      </div>
      <div class="body"><annotation-canvas></annotation-canvas></div>`;
  }
}

@customElement("annotation-panel")
export class AnnotationPanel extends LitElement {
  static styles = css`
    :host { display: flex; flex-direction: column; gap: 30px; width: 478px; flex: none; color: #212529; font-family: Inter, "Liberation Sans", sans-serif; white-space: nowrap; }
    .card { box-sizing: border-box; border: 2px solid #dfdfdf; border-radius: 8px; background: #fff; overflow: hidden; }
    .layer { height: 272px; padding: 24px 24px 0 23px; }
    .pick { display: flex; align-items: center; justify-content: space-between; font-size: 31px; line-height: 40px; letter-spacing: -0.100px; }
    .select { display: flex; align-items: center; justify-content: space-between; box-sizing: border-box; width: 316px; height: 76px; padding: 2px 24px 0; border: 2px solid #cdd2d7; border-radius: 8px; background: #f8f9fb; }
    .caret { border: solid transparent; border-width: 9px 10px 0; border-top-color: #212529; margin-top: -9px; }
    .hint { color: #6c757d; font-size: 25.500px; line-height: 48px; margin-top: 3px; letter-spacing: -0.070px; }
    .hint b { letter-spacing: 0.100px; }
    .hint .tight { letter-spacing: -0.270px; }
    .anno { position: relative; height: 680px; }
    .head { display: flex; align-items: center; box-sizing: border-box; height: 68px; padding: 4px 24px 0 23px; background: #f7f7f7; border-bottom: 2px solid #d6d6d6; font-size: 31px; }
    .head span { margin-right: auto; padding-bottom: 4px; }
    .act { display: flex; align-items: center; justify-content: center; height: 46px; border-radius: 8px; color: #fff; }
    .del { width: 42px; background: #cd444c; margin-right: 8px; }
    .close { width: 38px; background: #6f777e; }
    .icon { display: block; }
    .form { padding: 24px 14px 0; }
    .label { display: flex; align-items: center; justify-content: space-between; box-sizing: border-box; height: 36px; padding: 0 9px 1px 9px; background: #f8f9fb; border-radius: 8px; font-weight: 700; font-size: 24px; letter-spacing: 0.100px; }
    .label .icon { color: #2d7dff; }
    .input { display: flex; align-items: center; box-sizing: border-box; height: 76px; padding: 0 23px; margin-bottom: 16px; border: 2px solid #cdd2d7; border-radius: 8px; background: #e8ebee; color: #4a4e54; font-size: 31px; letter-spacing: -0.100px; }
    .none { margin: 0 0 16px; text-align: center; color: #6c757d; font-size: 25.500px; line-height: 38px; letter-spacing: -0.050px; }
    .combo { height: 82px; background: #fff; border-color: #c6c7c8; color: #333; justify-content: space-between; padding: 0 28px 0 25px; letter-spacing: -0.300px; }
    .down { border: solid transparent; border-width: 12px 8px 0; border-top-color: #333; margin-top: -6px; }
    .thumb { position: absolute; right: 4px; top: 72px; width: 14px; height: 508px; border-radius: 7px; background: rgba(0, 0, 0, .5); }
  `;
  render() {
    return html`
      <section class="card layer">
        <div class="pick"><span>Layer</span><span class="select">Part of speech<i class="caret"></i></span></div>
        <div class="hint">Create a <b>Dependency</b> relation by<br><span class="tight">drawing an arc between</span><br>annotations of this layer.</div>
      </section>
      <section class="card anno">
        <div class="head"><span>Annotation</span><i class="act del">${icon("trash", 26)}</i><i class="act close">${icon("times", 26)}</i></div>
        <div class="form">
          <div class="label">Layer</div><div class="input">Part of speech</div>
          <div class="label">Text${icon("crosshairs", 24)}</div><div class="input">looks</div>
          <div class="none">No links or relations connect to this<br>annotation.</div>
          <div class="label">UPOS</div><div class="input combo">VERB<i class="down"></i></div>
          <div class="label">XPOS</div><div class="input combo"></div>
        </div>
        <div class="thumb"></div>
      </section>`;
  }
}

@customElement("app-root")
export class AppRoot extends LitElement {
  static styles = css`
    :host { display: flex; flex-direction: column; width: 2380px; height: 1092px; overflow: hidden; background: #fff; }
    .chrome { height: 14px; flex: none; background: #373533; border-bottom: 2px solid #2a2826; }
    app-navbar { flex: none; }
    .page { display: flex; align-items: flex-start; gap: 30px; padding-top: 30px; height: 950px; overflow: hidden; flex: none; }
  `;
  render() {
    return html`
      <div class="chrome"></div>
      <app-navbar></app-navbar>
      <div class="page"><app-sidebar></app-sidebar><editor-card></editor-card><annotation-panel></annotation-panel></div>`;
  }
}
